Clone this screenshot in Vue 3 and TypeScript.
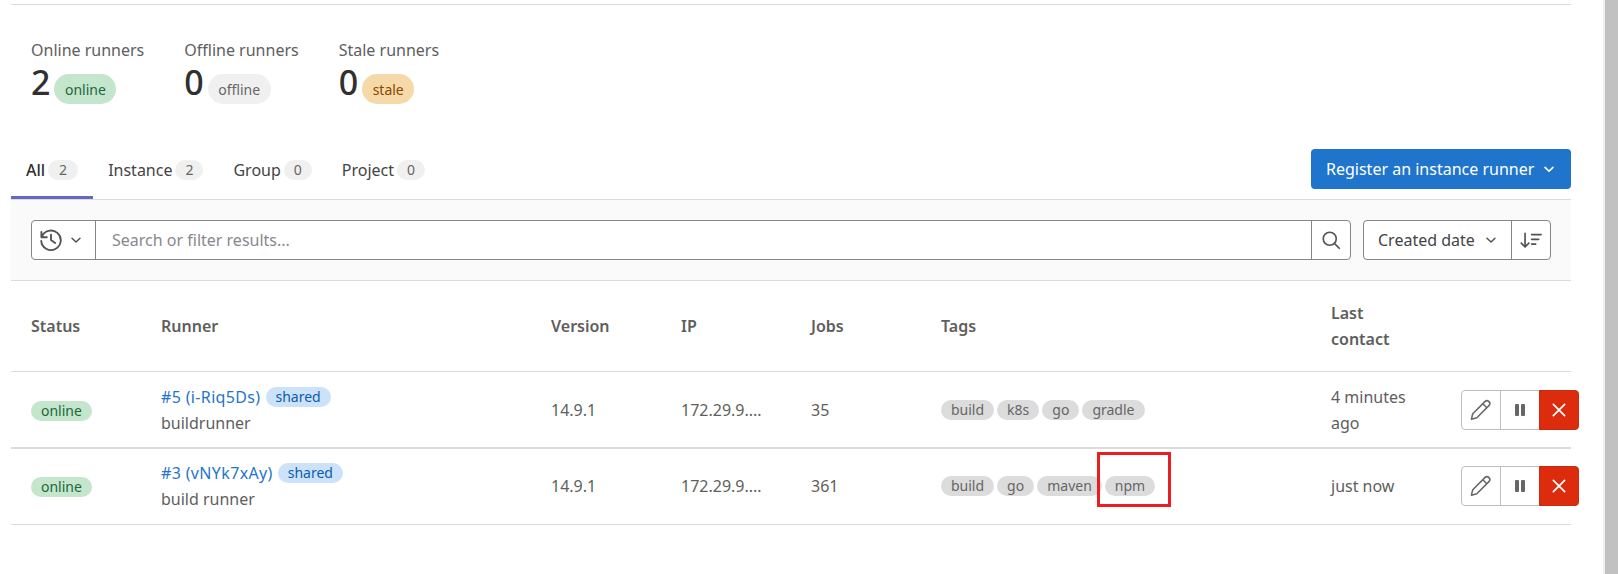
<script setup lang="ts">
interface Runner {
  id: string
  name: string
  version: string
  ip: string
  jobs: string
  tags: string[]
  contact: string
  cls: string
}
const stats = [
  { label: 'Online runners', count: 2, badge: 'online', cls: 'green' },
  { label: 'Offline runners', count: 0, badge: 'offline', cls: 'gray' },
  { label: 'Stale runners', count: 0, badge: 'stale', cls: 'orange' },
]
const tabs = [
  { label: 'All', count: 2, active: true },
  { label: 'Instance', count: 2, active: false },
  { label: 'Group', count: 0, active: false },
  { label: 'Project', count: 0, active: false },
]
const runners: Runner[] = [
  { id: '#5 (i-Riq5Ds)', name: 'buildrunner', version: '14.9.1', ip: '172.29.9....', jobs: '35', tags: ['build', 'k8s', 'go', 'gradle'], contact: '4 minutes ago', cls: 'row-thick' },
  { id: '#3 (vNYk7xAy)', name: 'build runner', version: '14.9.1', ip: '172.29.9....', jobs: '361', tags: ['build', 'go', 'maven', 'npm'], contact: 'just now', cls: 'row-last' },
]
</script>

<template>
  <div class="page">
    <main class="content">
      <section class="stats">
        <div v-for="s in stats" :key="s.label" class="stat">
          <div class="stat-label">{{ s.label }}</div>
          <div class="stat-value">
            <span class="stat-count">{{ s.count }}</span>
            <span class="badge" :class="s.cls">{{ s.badge }}</span>
          </div>
        </div>
      </section>

      <nav class="tabs-row">
        <ul class="tabs">
          <li v-for="t in tabs" :key="t.label" class="tab" :class="{ active: t.active }">
            <span>{{ t.label }}</span>
            <span class="tab-count">{{ t.count }}</span>
          </li>
        </ul>
        <button class="register">
          <span>Register an instance runner</span>
          <svg class="ico" viewBox="0 0 16 16" width="18" height="18"><path d="M4.5 6.5 8 10l3.5-3.5" fill="none" stroke="currentColor" stroke-width="1.5" stroke-linecap="round" stroke-linejoin="round" /></svg>
        </button>
      </nav>

      <section class="filter">
        <div class="search">
          <div class="history">
            <svg viewBox="0 0 16 16" width="24" height="24"><path d="M1.6 2.6v3.6h3.6M1.8 6.2A6.5 6.5 0 1 1 1.5 8.6M8 4.4V8l2.8 2" fill="none" stroke="#525252" stroke-width="1.25" stroke-linecap="round" stroke-linejoin="round" /></svg>
            <svg viewBox="0 0 16 16" width="16" height="16"><path d="M4 6.2 8 10l4-3.8" fill="none" stroke="#525252" stroke-width="1.5" stroke-linecap="round" stroke-linejoin="round" /></svg>
          </div>
          <div class="search-input">Search or filter results...</div>
          <div class="search-btn">
            <svg viewBox="0 0 16 16" width="20" height="20"><circle cx="7" cy="7" r="5.2" fill="none" stroke="#525252" stroke-width="1.3" /><path d="m11 11 3.6 3.6" fill="none" stroke="#525252" stroke-width="1.4" stroke-linecap="round" /></svg>
          </div>
        </div>
        <div class="sort">
          <div class="sort-field">
            <span>Created date</span>
            <svg viewBox="0 0 16 16" width="16" height="16"><path d="M4 6.2 8 10l4-3.8" fill="none" stroke="#525252" stroke-width="1.5" stroke-linecap="round" stroke-linejoin="round" /></svg>
          </div>
          <div class="sort-dir">
            <svg viewBox="0 0 20 16" width="24" height="19"><path d="M5 2v11.5M1.8 10.2 5 13.5l3.2-3.3M10.5 3h8M10.5 7h6M10.5 11h3.5" fill="none" stroke="#525252" stroke-width="1.4" stroke-linecap="round" stroke-linejoin="round" /></svg>
          </div>
        </div>
      </section>

      <section class="table">
        <div class="grid head">
          <div>Status</div>
          <div>Runner</div>
          <div>Version</div>
          <div>IP</div>
          <div>Jobs</div>
          <div>Tags</div>
          <div class="narrow">Last contact</div>
          <div></div>
        </div>
        <div v-for="r in runners" :key="r.id" class="grid row" :class="r.cls">
          <div><span class="badge small green">online</span></div>
          <div class="runner">
            <div class="runner-line">
              <span class="link">{{ r.id }}</span>
              <span class="badge small blue">shared</span>
            </div>
            <div>{{ r.name }}</div>
          </div>
          <div>{{ r.version }}</div>
          <div>{{ r.ip }}</div>
          <div>{{ r.jobs }}</div>
          <div class="tags">
            <span v-for="t in r.tags" :key="t" class="badge small tag">{{ t }}</span>
          </div>
          <div class="narrow">{{ r.contact }}</div>
          <div class="actions">
            <button class="act">
              <svg viewBox="0 0 16 16" width="24" height="24"><path d="M10.6 2.4a1.9 1.9 0 0 1 2.7 2.7L5.2 13.2l-3.6.9.9-3.6zM9.2 3.8l2.7 2.7" fill="none" stroke="#666" stroke-width="1" stroke-linejoin="round" /></svg>
            </button>
            <button class="act">
              <svg viewBox="0 0 16 16" width="16" height="16"><rect x="3" y="2" width="4" height="12" rx="1" fill="#666" /><rect x="9" y="2" width="4" height="12" rx="1" fill="#666" /></svg>
            </button>
            <button class="act danger">
              <svg viewBox="0 0 16 16" width="18" height="18"><path d="m3 3 10 10M13 3 3 13" fill="none" stroke="#fff" stroke-width="1.5" stroke-linecap="round" /></svg>
            </button>
          </div>
        </div>
      </section>
    </main>
    <div class="scrollbar"></div>
    <div class="annotation"></div>
  </div>
</template>

<style>
html, body { margin: 0; background: #fff; overflow: hidden; }
</style>

<style scoped>
.page {
  position: relative;
  display: flex;
  height: 574px;
  font-family: "Noto Sans", "Open Sans", sans-serif;
  font-size: 16px;
  color: #5e5e5e;
  overflow: hidden;
}
.content {
  box-sizing: border-box;
  width: 1560px;
  height: 570px;
  margin: 4px 32px 0 11px;
  flex: none;
  border-top: 1px solid #dcdcde;
}
.scrollbar {
  width: 15px;
  flex: none;
  box-sizing: border-box;
  background: #c1c1c1;
  border-left: 2px solid #f0f0f0;
}
.annotation {
  position: absolute;
  left: 1097px;
  top: 452px;
  width: 74px;
  height: 55px;
  box-sizing: border-box;
  border: 3px solid #ed1c24;
}
.stats { display: flex; padding: 32px 20px 0; height: 105px; box-sizing: border-box; }
.stat { margin-right: 40px; }
.stat-label { line-height: 26px; color: #5e5e5e; }
.stat-value { display: flex; align-items: center; height: 36px; }
.stat-count {
  font-size: 34px;
  font-weight: 500;
  line-height: 36px;
  color: #303030;
  margin: 2px 4px 0 0;
}
.badge {
  display: inline-flex;
  align-items: center;
  height: 30px;
  padding: 0 10.5px;
  border-radius: 15px;
  font-size: 14px;
  margin-top: 16px;
  box-sizing: border-box;
}
.badge.small { height: 20px; border-radius: 10px; margin-top: 0; padding: 0 10px; }
.green { background: #c3e6cd; color: #24663b; }
.gray { background: #f0f0f0; color: #666; }
.orange { background: #f5d9a8; color: #8f4700; }
.blue { background: #cbe2f9; color: #0b5cad; }
.tag { background: #dcdcdc; color: #666; }
.tabs-row {
  display: flex;
  justify-content: space-between;
  height: 90px;
  box-sizing: border-box;
  padding-top: 39px;
  border-bottom: 1px solid #dcdcde;
}
.tabs { display: flex; list-style: none; margin: 0; padding: 0; }
.tab {
  display: flex;
  align-items: center;
  gap: 3px;
  height: 50px;
  padding: 0 15px 9px;
  box-sizing: border-box;
  color: #444;
  line-height: 1;
}
.tab.active { color: #303030; font-weight: 500; box-shadow: inset 0 -3px 0 #6666c4; }
.tab-count {
  display: inline-flex;
  align-items: center;
  justify-content: center;
  min-width: 28px;
  height: 20px;
  padding: 0 8px;
  box-sizing: border-box;
  border-radius: 10px;
  background: #f0f0f0;
  color: #666;
  font-size: 14px;
  font-weight: 400;
}
.tab.active .tab-count { min-width: 30px; }
.register {
  display: flex;
  align-items: center;
  justify-content: space-between;
  width: 260px;
  height: 40px;
  padding: 0 13px 0 15px;
  border: 0;
  border-radius: 4px;
  background: #1f75cb;
  color: #fff;
  font: inherit;
}
.filter {
  display: flex;
  align-items: center;
  height: 81px;
  box-sizing: border-box;
  padding: 0 20px;
  background: #fafafa;
  border-bottom: 1px solid #dcdcde;
}
.search {
  display: flex;
  width: 1320px;
  height: 40px;
  flex: none;
  box-sizing: border-box;
  border: 1px solid #868686;
  border-radius: 4px;
  background: #fff;
}
.history {
  width: 64px;
  flex: none;
  display: flex;
  align-items: center;
  gap: 5px;
  padding-left: 7px;
  border-right: 1px solid #868686;
  box-sizing: border-box;
}
.search-input { flex: 1; line-height: 38px; padding-left: 16px; color: #89888d; }
.search-btn {
  width: 38px;
  flex: none;
  display: flex;
  align-items: center;
  justify-content: center;
  border-left: 1px solid #868686;
}
.sort {
  display: flex;
  margin-left: 12px;
  width: 188px;
  flex: none;
  height: 40px;
  box-sizing: border-box;
  border: 1px solid #868686;
  border-radius: 4px;
  background: #fff;
}
.sort-field {
  flex: 1;
  display: flex;
  align-items: center;
  justify-content: space-between;
  padding: 0 12px 0 14px;
  border-right: 1px solid #868686;
  color: #444;
}
.sort-dir { width: 38px; flex: none; display: flex; align-items: center; justify-content: center; }
.grid {
  display: grid;
  grid-template-columns: 130px 390px 130px 130px 130px 390px 150px 110px;
  align-items: center;
  box-sizing: border-box;
  border-bottom: 1px solid #dcdcde;
}
.grid > div { padding-left: 20px; line-height: 26px; box-sizing: border-box; min-width: 0; }
.head { height: 91px; font-weight: 600; color: #5e5e5e; }
.row { height: 76px; }
.row-thick { height: 77px; border-bottom: 2px solid #dcdcde; }
.row-last { padding-bottom: 1px; }
.runner-line { display: flex; align-items: center; gap: 5px; }
.link { color: #1f75cb; letter-spacing: 0.35px; }
.tags { display: flex; gap: 3px; }
.grid > .narrow { width: 105px; }
.grid > .actions { display: flex; padding-left: 0; }
.act {
  width: 40px;
  height: 40px;
  flex: none;
  display: flex;
  align-items: center;
  justify-content: center;
  padding: 0;
  margin-left: -1px;
  background: #fff;
  border: 1px solid #bfbfbf;
}
.act:first-child { margin-left: 0; border-radius: 4px 0 0 4px; }
.act.danger { background: #dd2b0e; border-color: #c92a10; border-radius: 0 4px 4px 0; }
</style>
